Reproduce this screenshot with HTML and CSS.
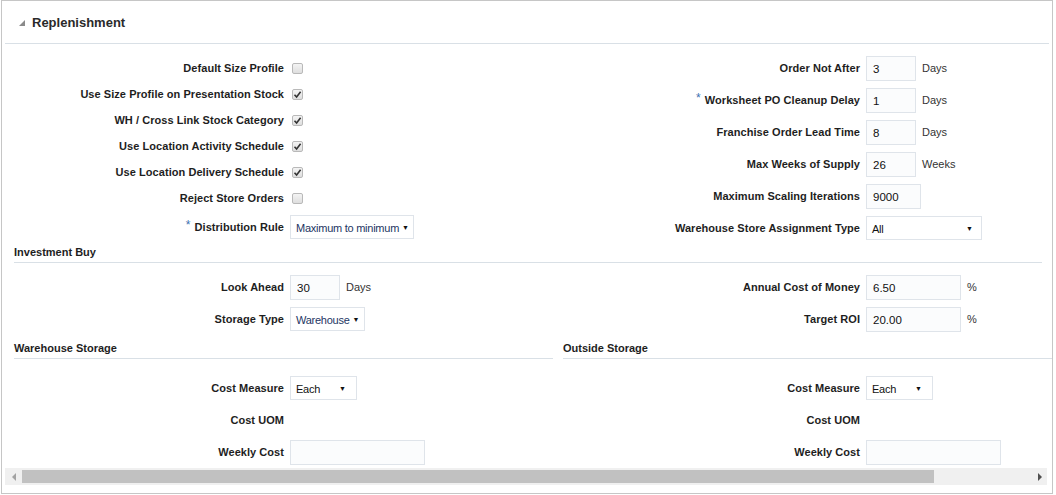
FILE: index.html
```html
<!DOCTYPE html>
<html>
<head>
<meta charset="utf-8">
<link rel="stylesheet" href="styles.css">
</head>
<body>
<div class="frame">
  <div class="panel-header">
    <svg class="disclose" width="6" height="6" viewBox="0 0 6 6"><polygon points="6,0 6,6 0,6" fill="#8a8a8a"/></svg>
    <span class="panel-title">Replenishment</span>
  </div>
  <div class="content">
    <div class="cols top">
      <div class="form left-form checks">
        <div class="row"><span class="lbl">Default Size Profile</span><span class="fld"><span class="cb"></span></span></div>
        <div class="row"><span class="lbl">Use Size Profile on Presentation Stock</span><span class="fld"><span class="cb on"><svg width="9" height="9" viewBox="0 0 9 9"><path d="M1.5 4.8 L3.6 7 L7.6 1.8" fill="none" stroke="#333" stroke-width="1.6"/></svg></span></span></div>
        <div class="row"><span class="lbl">WH / Cross Link Stock Category</span><span class="fld"><span class="cb on"><svg width="9" height="9" viewBox="0 0 9 9"><path d="M1.5 4.8 L3.6 7 L7.6 1.8" fill="none" stroke="#333" stroke-width="1.6"/></svg></span></span></div>
        <div class="row"><span class="lbl">Use Location Activity Schedule</span><span class="fld"><span class="cb on"><svg width="9" height="9" viewBox="0 0 9 9"><path d="M1.5 4.8 L3.6 7 L7.6 1.8" fill="none" stroke="#333" stroke-width="1.6"/></svg></span></span></div>
        <div class="row"><span class="lbl">Use Location Delivery Schedule</span><span class="fld"><span class="cb on"><svg width="9" height="9" viewBox="0 0 9 9"><path d="M1.5 4.8 L3.6 7 L7.6 1.8" fill="none" stroke="#333" stroke-width="1.6"/></svg></span></span></div>
        <div class="row"><span class="lbl">Reject Store Orders</span><span class="fld"><span class="cb"></span></span></div>
        <div class="row tall"><span class="lbl"><span class="req">*</span>Distribution Rule</span><span class="fld"><span class="sel blue w-dist"><span class="sel-text">Maximum to minimum</span><span class="arrow">&#9660;</span></span></span></div>
      </div>
      <div class="form right-form">
        <div class="row tall"><span class="lbl">Order Not After</span><span class="fld"><input class="inp w50" type="text" value="3" readonly><span class="unit">Days</span></span></div>
        <div class="row tall"><span class="lbl"><span class="req">*</span>Worksheet PO Cleanup Delay</span><span class="fld"><input class="inp w50" type="text" value="1" readonly><span class="unit">Days</span></span></div>
        <div class="row tall"><span class="lbl">Franchise Order Lead Time</span><span class="fld"><input class="inp w50" type="text" value="8" readonly><span class="unit">Days</span></span></div>
        <div class="row tall"><span class="lbl">Max Weeks of Supply</span><span class="fld"><input class="inp w50" type="text" value="26" readonly><span class="unit">Weeks</span></span></div>
        <div class="row tall"><span class="lbl">Maximum Scaling Iterations</span><span class="fld"><input class="inp w55" type="text" value="9000" readonly></span></div>
        <div class="row tall"><span class="lbl">Warehouse Store Assignment Type</span><span class="fld"><span class="sel w-wsat"><span class="sel-text">All</span><span class="arrow">&#9660;</span></span></span></div>
      </div>
    </div>

    <div class="sub-header full">Investment Buy</div>
    <div class="cols invest">
      <div class="form left-form">
        <div class="row tall"><span class="lbl">Look Ahead</span><span class="fld"><input class="inp w50" type="text" value="30" readonly><span class="unit">Days</span></span></div>
        <div class="row tall"><span class="lbl">Storage Type</span><span class="fld"><span class="sel blue w-stor"><span class="sel-text">Warehouse</span><span class="arrow">&#9660;</span></span></span></div>
      </div>
      <div class="form right-form">
        <div class="row tall"><span class="lbl">Annual Cost of Money</span><span class="fld"><input class="inp w95" type="text" value="6.50" readonly><span class="unit">%</span></span></div>
        <div class="row tall"><span class="lbl">Target ROI</span><span class="fld"><input class="inp w95" type="text" value="20.00" readonly><span class="unit">%</span></span></div>
      </div>
    </div>

    <div class="cols storage">
      <div class="store left-store">
        <div class="sub-header">Warehouse Storage</div>
        <div class="form left-form">
          <div class="row tall"><span class="lbl">Cost Measure</span><span class="fld"><span class="sel w-each"><span class="sel-text">Each</span><span class="arrow">&#9660;</span></span></span></div>
          <div class="row tall"><span class="lbl">Cost UOM</span><span class="fld"></span></div>
          <div class="row tall"><span class="lbl">Weekly Cost</span><span class="fld"><input class="inp w135" type="text" value="" readonly></span></div>
        </div>
      </div>
      <div class="store right-store">
        <div class="sub-header">Outside Storage</div>
        <div class="form right-form">
          <div class="row tall"><span class="lbl">Cost Measure</span><span class="fld"><span class="sel w-each"><span class="sel-text">Each</span><span class="arrow">&#9660;</span></span></span></div>
          <div class="row tall"><span class="lbl">Cost UOM</span><span class="fld"></span></div>
          <div class="row tall"><span class="lbl">Weekly Cost</span><span class="fld"><input class="inp w135" type="text" value="" readonly></span></div>
        </div>
      </div>
    </div>
  </div>
  <div class="hscroll">
    <span class="sarrow left-arrow"></span>
    <span class="thumb"></span>
    <span class="sarrow right-arrow"></span>
  </div>
</div>
</body>
</html>
```

FILE: styles.css
```css
html, body {
  margin: 0;
  padding: 0;
  background: #ffffff;
}
body {
  font-family: "Liberation Sans", Arial, sans-serif;
  font-size: 11px;
  color: #1e1e1e;
}
.frame {
  box-sizing: border-box;
  margin-left: 1px;
  width: 1052px;
  height: 494px;
  border: 1px solid #c6c6c6;
  display: flex;
  flex-direction: column;
  overflow: hidden;
}
.panel-header {
  box-sizing: border-box;
  height: 43px;
  margin: 0 3px 0 3px;
  border-bottom: 1px solid #d9e0e6;
  display: flex;
  align-items: center;
  padding-left: 14px;
}
.disclose {
  display: block;
  margin-top: 2px;
}
.panel-title {
  font-size: 13px;
  font-weight: bold;
  color: #2a2a2a;
  margin-left: 7px;
}
.content {
  padding-left: 12px;
}
.cols {
  display: grid;
  grid-template-columns: 549px 1fr;
}
.top {
  padding-top: 8px;
}
.form {
  display: flex;
  flex-direction: column;
}
.row {
  display: grid;
  align-items: center;
  column-gap: 6px;
  height: 26px;
}
.row.tall {
  height: 32px;
}
.left-form .row {
  grid-template-columns: 270px auto;
}
.right-form .row {
  grid-template-columns: 297px auto;
}
.checks {
  padding-top: 3px;
}
.lbl {
  text-align: right;
  font-weight: bold;
  color: #1e1e1e;
  white-space: nowrap;
  letter-spacing: 0.05px;
}
.req {
  color: #3c6fb0;
  font-weight: normal;
  font-size: 12px;
  margin-right: 4px;
  position: relative;
  top: -2px;
}
.fld {
  display: flex;
  align-items: center;
}
.cb {
  box-sizing: border-box;
  width: 11px;
  height: 11px;
  margin-left: 2px;
  border: 1px solid #b9b9b9;
  border-radius: 2px;
  background: linear-gradient(#f4f4f4, #dedede);
  display: flex;
  align-items: center;
  justify-content: center;
}
.cb svg {
  display: block;
}
.inp {
  box-sizing: border-box;
  height: 25px;
  border: 1px solid #dfe4ea;
  background: #fbfcfd;
  font-family: "Liberation Sans", Arial, sans-serif;
  font-size: 11.5px;
  color: #111;
  padding: 2px 6px 0 6px;
  margin: 0;
  outline: none;
}
.w50 { width: 50px; }
.w55 { width: 55px; }
.w95 { width: 95px; }
.w135 { width: 135px; }
.unit {
  margin-left: 6px;
  color: #333;
  font-size: 11px;
}
.sel {
  box-sizing: border-box;
  height: 24px;
  border: 1px solid #dfe4ea;
  background: #ffffff;
  display: flex;
  align-items: center;
  justify-content: space-between;
  padding: 1px 5px 0 5px;
  font-size: 11px;
  color: #111;
}
.sel.blue {
  color: #1d3563;
}
.sel-text {
  white-space: nowrap;
  letter-spacing: -0.25px;
}
.arrow {
  font-size: 7px;
  color: #111;
  margin-left: 3px;
  flex: none;
}
.w-dist { width: 124px; padding-right: 5px; }
.w-wsat { width: 116px; padding-right: 8px; }
.w-stor { width: 75px; padding-right: 5px; }
.w-each { width: 67px; padding-right: 10px; }
.sub-header {
  box-sizing: border-box;
  font-weight: bold;
  color: #1e1e1e;
  line-height: 14px;
  padding-top: 1px;
  padding-bottom: 3px;
  border-bottom: 1px solid #d9e0e6;
}
.sub-header.full {
  margin-right: 10px;
}
.invest {
  padding-top: 8px;
}
.storage {
  padding-top: 5px;
}
.left-store .sub-header {
  margin-right: 10px;
}
.store .form {
  padding-top: 13px;
}
.hscroll {
  box-sizing: border-box;
  margin: 0 5px 0 3px;
  height: 17px;
  background: #f0f0f0;
  display: flex;
  align-items: center;
  position: relative;
}
.thumb {
  display: block;
  margin-left: 17px;
  width: 912px;
  height: 13px;
  background: #c1c1c1;
}
.sarrow {
  position: absolute;
  top: 5px;
  width: 0;
  height: 0;
  border-top: 4px solid transparent;
  border-bottom: 4px solid transparent;
}
.left-arrow {
  left: 7px;
  border-right: 4px solid #a3a3a3;
}
.right-arrow {
  right: 5px;
  border-left: 4px solid #505050;
}
```
